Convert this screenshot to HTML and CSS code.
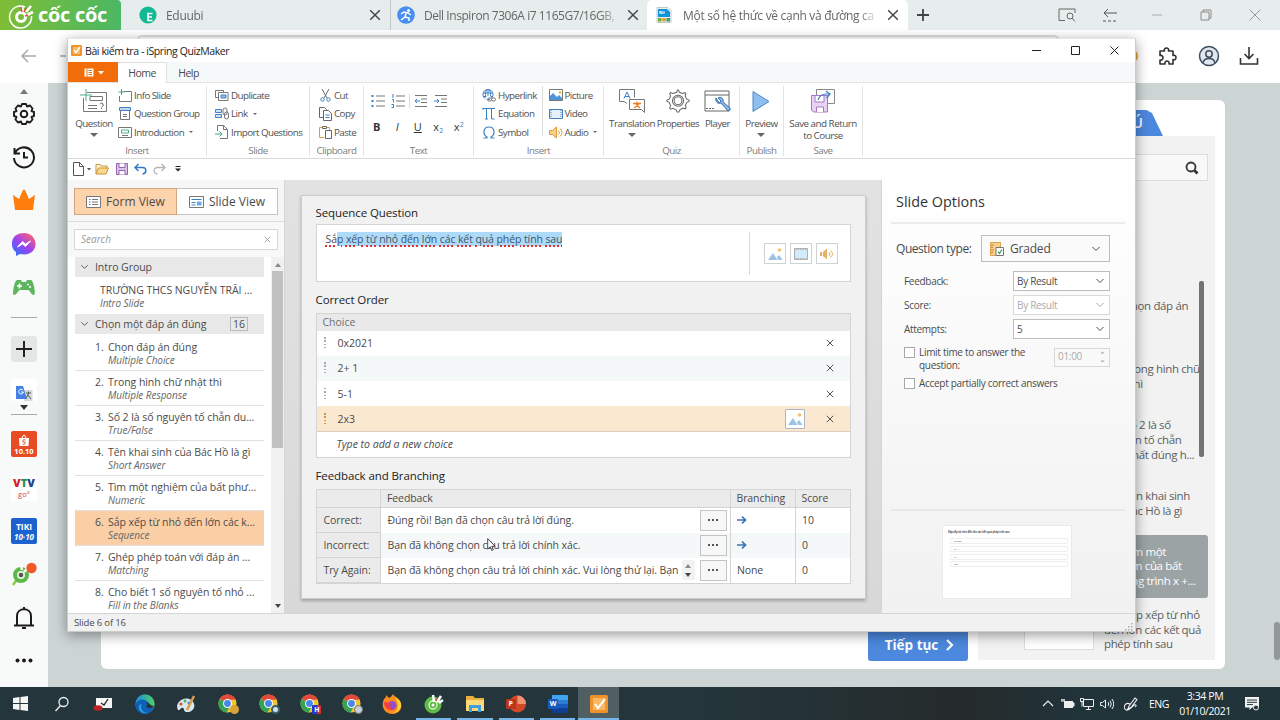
FILE: index.html
```
<!DOCTYPE html>
<html lang="vi">
<head>
  <meta charset="UTF-8" />
  <title>Bài kiểm tra - iSpring QuizMaker</title>
  <meta name="viewport" content="width=device-width, initial-scale=1" />
  <link rel="stylesheet" href="styles.css">
</head>
<body>
  <!-- shared icons -->
  <svg class="defs" width="0" height="0">
    <symbol id="chev" viewBox="0 0 10 6"><path d="M1.500 1l3.500 3.500l3.500-3.500" fill="none" stroke="currentColor" stroke-width="1"/></symbol>
    <symbol id="x" viewBox="0 0 10 10"><path d="M1 1l8 8M9 1l-8 8" fill="none" stroke="currentColor" stroke-width="1.200"/></symbol>
    <symbol id="hills" viewBox="0 0 16 14"><path d="M1 13l5-7 4.500 7zM10 11q0-3 2.500-2.500l3 4.500h-4z" fill="#9cc3e6"/><circle cx="12.500" cy="3" r="1.800" fill="#f5c069"/></symbol>
    <symbol id="chrome" viewBox="0 0 20 20">
      <circle cx="10" cy="10" r="9.500" fill="#f4c430"/>
      <path d="M10 10L1.800 5.200A9.500 9.500 0 0 1 18.700 6H10z" fill="#e2493b"/>
      <path d="M1.800 5.200A9.500 9.500 0 0 0 9 19.500L13 12z" fill="#35a355"/>
      <circle cx="10" cy="10" r="4.700" fill="#fff"/><circle cx="10" cy="10" r="3.600" fill="#4787e8"/>
    </symbol>
  </svg>

  <!-- browser -->
  <header class="tabs">
    <div class="coccoc">
      <svg width="26" height="27" viewBox="0 0 26 27" fill="none" stroke="#fff"><path d="M17 5A11 11 0 1 0 23.500 14" stroke-width="1.500"/><circle cx="13" cy="15" r="4.500" stroke-width="3"/><path d="M14 4l1 6M23 4l-5 6M25 10l-6 3" stroke-width="2.600"/><path d="M13 5l1 5M20 13l-3 1M18 6l-2 4" stroke="#e8503a" stroke-width="1.500"/></svg>
      <span>cốc cốc</span>
    </div>
    <div class="tab tab-first">
      <svg width="18" height="18" viewBox="0 0 18 18"><circle cx="9" cy="9" r="8.600" fill="#14b894"/><path d="M13.500 7.500H9v7h4.500M9 11h4" stroke="#fff" stroke-width="1.600" fill="none"/></svg>
      <span class="tab-text">Eduubi</span>
      <svg class="tab-x" width="12" height="12"><use href="#x"/></svg>
    </div>
    <div class="tab tab-second">
      <svg width="18" height="18" viewBox="0 0 18 18"><circle cx="9" cy="9" r="8.800" fill="#4a8df0"/><path d="M4 8l3-2 4 1 3 2M9 7l-1 4-4 3M8 11l4 1 0 3" stroke="#fff" stroke-width="1.500" fill="none"/><circle cx="11.500" cy="4.500" r="1.500" fill="#fff"/></svg>
      <span class="tab-text">Dell Inspiron 7306A i7 1165G7/16GB,</span>
      <svg class="tab-x" width="12" height="12"><use href="#x"/></svg>
    </div>
    <div class="tab tab-active">
      <svg width="16" height="16" viewBox="0 0 16 16"><path d="M1 .5h11l3 3V15.500H1z" fill="#e9f0f2" stroke="#bccbd0"/><path d="M2 2h9l3 3v5H2z" fill="#1292d8"/><path d="M2 11h3.500v3.500H2z" fill="#6eae38"/><path d="M6.300 11h3.500v3.500H6.300z" fill="#ee9b22"/><path d="M10.500 11H14v3.500h-3.500z" fill="#34a26b"/><path d="M4 7V4l2 3V4M8 4v3" stroke="#fff" fill="none"/></svg>
      <span class="tab-text">Một số hệ thức về cạnh và đường ca</span>
      <svg class="tab-x" width="12" height="12"><use href="#x"/></svg>
    </div>
    <svg class="tab-plus" width="14" height="14" viewBox="0 0 14 14"><path d="M7 1v12M1 7h12" stroke="#444" stroke-width="1.800"/></svg>
    <div class="browser-controls">
      <svg width="18" height="14" viewBox="0 0 18 14" fill="none" stroke="#666"><path d="M7 12.500H1V1h16v4"/><circle cx="12" cy="8" r="3"/><path d="M14 10l3 3.500"/></svg>
      <svg width="16" height="14" viewBox="0 0 16 14" fill="none" stroke="#555"><path d="M15 5H2M6 1L2 5l4 4"/><path d="M1 13h14" stroke-dasharray="3 2"/></svg>
      <svg width="12" height="12" viewBox="0 0 12 12"><path d="M1 6h10" stroke="#aaa"/></svg>
      <svg width="12" height="12" viewBox="0 0 12 12" fill="none" stroke="#888"><path d="M1 3h8v8H1zM3 3V1h8v8H9"/></svg>
      <svg width="12" height="12" viewBox="0 0 12 12"><path d="M.5.500l11 11M11.500.500l-11 11" stroke="#999"/></svg>
    </div>
  </header>

  <div class="toolbar">
    <svg width="46" height="16" viewBox="0 0 46 16" fill="none" stroke="#aaa" stroke-width="1.500"><path d="M16 8H2M8 2L2 8l6 6M40 8h6"/></svg>
    <div class="address"></div>
    <div class="toolbar-right">
      <span class="ext-dot"></span>
      <svg width="20" height="20" viewBox="0 0 20 20" fill="none" stroke="#333" stroke-width="1.600" stroke-linejoin="round"><path d="M2 5h4.500c-1.500-4 5.500-4 4 0H15v4.500c4-1.500 4 5.500 0 4V18h-4c1-4-5-4-4 0H2v-4c4 1 4-5.500 0-4.500z"/></svg>
      <svg width="22" height="22" viewBox="0 0 22 22" fill="#dfe6ee" stroke="#3e4c5e" stroke-width="1.500"><circle cx="11" cy="11" r="9.500"/><circle cx="11" cy="9" r="3.200"/><path d="M5 18c1-6 11-6 12 0" fill="none"/></svg>
      <svg width="20" height="20" viewBox="0 0 20 20" fill="none" stroke="#333" stroke-width="1.600"><path d="M10 1v11M5.500 8l4.500 4.500L14.500 8M1.500 12v6h17v-6"/></svg>
    </div>
  </div>

  <div class="browser-body">
    <nav class="side">
      <svg class="side-up" width="8" height="5" viewBox="0 0 8 5"><path d="M0 5l4-5 4 5z" fill="#777"/></svg>
      <div class="slot"><svg width="24" height="24" viewBox="0 0 24 24" fill="none" stroke="#1c1c1c" stroke-width="1.900" stroke-linejoin="round"><path d="M10 2h4l1 2.500 3-1 2.500 3-1 2.500 2.500 1v4l-2.500 1 1 2.500-2.500 3-3-1-1 2.500h-4l-1-2.500-3 1-2.500-3 1-2.500L2 14v-4l2.500-1-1-2.500 2.500-3 3 1z"/><circle cx="12" cy="12" r="3.300"/></svg></div>
      <div class="slot"><svg width="24" height="24" viewBox="0 0 24 24" fill="none" stroke="#1c1c1c" stroke-width="2"><path d="M2.500 3v5.500H8M3 8a10 10 0 1 1-1 5" /><path d="M12 7v5.500h4" /></svg></div>
      <div class="slot"><svg width="24" height="24" viewBox="0 0 24 24"><path d="M1 7l6 4 4-9q1-1 2 0l4 9 6-4-2 15H3z" fill="#ff7f0e"/></svg></div>
      <div class="slot"><svg width="24" height="24" viewBox="0 0 24 24"><defs><linearGradient id="msg" x1="0" y1="1" x2=".8" y2="0"><stop offset="0" stop-color="#1b78ff"/><stop offset=".55" stop-color="#a142f0"/><stop offset="1" stop-color="#ff6470"/></linearGradient></defs><path d="M12 1C-3 1-2 17 4 20v4l4-2c20 4 20-21 4-21z" fill="url(#msg)"/><path d="M5.500 15l5-5.500 3 2.500 5-3-5 5.500-3-2.500z" fill="#fff" stroke="#fff"/></svg></div>
      <div class="slot"><svg width="24" height="20" viewBox="0 0 24 20"><path d="M5 3h4l1 2h4l1-2h4c3 1 5 15 3 15-3 0-4-5-6-5H8c-2 0-3 5-6 5C0 18 2 4 5 3z" fill="#5cb660"/><path d="M5 9h5M7.500 6.500v5M15 7.500h2M17 10h2" stroke="#fff" stroke-width="1.700"/></svg></div>
      <hr>
      <div class="slot"><div class="plus-box"><svg width="18" height="18" viewBox="0 0 18 18"><path d="M9 1v16M1 9h16" stroke="#222" stroke-width="2"/></svg></div></div>
      <div class="translate"><svg width="17" height="15" viewBox="0 0 17 15"><path d="M7 4h9.500v11H8z" fill="#d5dadc"/><path d="M0 0h7l4 13H0z" fill="#4480e6"/><path d="M7 4.200A2.400 2.400 0 1 0 7.500 6H5" stroke="#fff" fill="none"/><path d="M10 7h5M12.500 5.500V7l-2 5M12 9l3 4" stroke="#555" fill="none"/></svg></div>
      <svg class="side-down" width="8" height="5" viewBox="0 0 8 5"><path d="M0 0l4 5 4-5z" fill="#333"/></svg>
      <hr>
      <div class="slot"><div class="app app-shopee"><svg width="12" height="12" viewBox="0 0 12 12"><path d="M1 4h10l-.5 8h-9z" fill="#fff"/><path d="M4 4q2-6 4 0" stroke="#fff" fill="none"/><path d="M7.500 6C4 5 4 8 6 8s2 3-1.500 2" stroke="#e84c24" fill="none"/></svg><b>10.10</b></div></div>
      <div class="slot"><div class="app app-vtv"><b><i>V</i><i>T</i><i>V</i></b><span>go°</span></div></div>
      <div class="slot"><div class="app app-tiki"><b>TIKI</b><b class="it">10·10</b></div></div>
      <div class="slot"><svg width="26" height="26" viewBox="0 0 26 26"><path d="M2 24l5-7" stroke="#8bcd3c" stroke-width="2.500"/><circle cx="10" cy="14" r="6" fill="#e9f4e2" stroke="#5cb947" stroke-width="4"/><path d="M10 4l1 5M16 8l-3 3" stroke="#fff" stroke-width="2.500"/><circle cx="10" cy="14" r="2.300" fill="#555"/><circle cx="20.500" cy="7" r="5.200" fill="#f1592a"/></svg></div>
      <div class="slot"><svg width="22" height="24" viewBox="0 0 22 24" fill="none" stroke="#1c1c1c" stroke-width="2"><path d="M1 19.500h20M4 19V10c0-9 14-9 14 0v9M11 1v3M9 22h4"/></svg></div>
      <div class="slot"><svg width="18" height="5" viewBox="0 0 18 5" fill="#1c1c1c"><circle cx="2.500" cy="2.500" r="2"/><circle cx="9" cy="2.500" r="2"/><circle cx="15.500" cy="2.500" r="2"/></svg></div>
    </nav>

    <main class="page">
      <div class="lesson">
        <div class="lesson-main">
          <button class="next">Tiếp tục <svg width="9" height="14" viewBox="0 0 9 14"><path d="M2 2l5 5-5 5" fill="none" stroke="#fff" stroke-width="2.200"/></svg></button>
        </div>
        <aside class="outline">
          <div class="outline-tab">GHI CHÚ</div>
          <div class="outline-panel">
            <div class="outline-search"><svg width="14" height="14" viewBox="0 0 14 14" fill="none" stroke="#333" stroke-width="1.800"><circle cx="6" cy="6" r="4.500"/><path d="M9.500 9.500l3 3" stroke-width="2.800"/></svg></div>
            <div class="outline-item">Chọn đáp án<br>đúng</div>
            <div class="outline-item">Trong hình chữ<br>nhật thì</div>
            <div class="outline-item">Số 2 là số<br>nguyên tố chẵn<br>duy nhất đúng h...</div>
            <div class="outline-item">Tên khai sinh<br>của Bác Hồ là gì</div>
            <div class="outline-item current">Tìm một<br>nghiệm của bất<br>phương trình x +...</div>
            <div class="outline-item">Sắp xếp từ nhỏ<br>đến lớn các kết quả<br>phép tính sau</div>
            <div class="outline-thumb"></div>
            <div class="outline-scroll"></div>
          </div>
        </aside>
      </div>
      <div class="page-scroll"></div>
    </main>
  </div>

  <!-- quiz maker window -->
  <section class="window">
    <div class="titlebar">
      <svg width="11" height="11" viewBox="0 0 11 11"><rect width="11" height="11" rx="1" fill="#f0932b"/><rect x="2" y="2" width="7" height="7" fill="#f8b965"/><path d="M3 5l2 2.500L9 2" stroke="#fff" stroke-width="1.400" fill="none"/></svg>
      <span>Bài kiểm tra - iSpring QuizMaker</span>
      <div class="win-controls">
        <svg width="9" height="9" viewBox="0 0 9 9"><path d="M0 4.500h9" stroke="#222"/></svg>
        <svg width="9" height="9" viewBox="0 0 9 9"><path d="M.5.500h8v8h-8z" stroke="#222" fill="none"/></svg>
        <svg width="9" height="9" viewBox="0 0 9 9"><path d="M.5.500l8 8M8.500.500l-8 8" stroke="#222"/></svg>
      </div>
    </div>

    <div class="menu">
      <div class="menu-file"><svg width="22" height="9" viewBox="0 0 22 9"><path d="M.5.500h9v8h-9z" fill="#fff"/><path d="M3 .5v8M4.500 2.500H8M4.500 4.500H8M4.500 6.500H8" stroke="#f36c0a"/><path d="M14 3h6l-3 3.500z" fill="#fff"/></svg></div>
      <div class="menu-tab active">Home</div>
      <div class="menu-tab">Help</div>
    </div>

    <div class="ribbon">
      <div class="group">
        <div class="group-body">
          <div class="big w-question">
            <svg width="28" height="24" viewBox="0 0 28 24" fill="none" stroke="#777"><path d="M7 3.500h19.500v19h-23V9"/><path d="M10 7.500h12.500v4H10zM8 16.500h9M8 19.500h9"/><path d="M20 15q2-2 3 0t-1.500 3M21.500 19v1" stroke="#666"/><path d="M6 0v12M0 6h12" stroke="#4cae85"/></svg>
            <span>Question</span><i class="arrow"></i>
          </div>
          <div class="col">
            <div class="cmd"><svg width="14" height="13" viewBox="0 0 14 13" fill="none" stroke="#777"><path d="M6 2.500h7.500v10h-12V7"/><path d="M3.500 0v6M.5 3h6" stroke="#3ea77b"/></svg>Info Slide</div>
            <div class="cmd"><svg width="14" height="13" viewBox="0 0 14 13" fill="none" stroke="#777"><path d="M2.500 4v8.500h9V4M5 7.500h4M5 9.500h4"/><path d="M1.500.500h11v3h-11z" stroke="#4580c4" fill="#bcd6f0"/></svg>Question Group</div>
            <div class="cmd"><svg width="14" height="13" viewBox="0 0 14 13" fill="none" stroke="#777"><path d="M.5 1.500h13v10H.5z"/><path d="M3.500 4h7v3h-7z" stroke="#4cae85"/><path d="M4 9.500h6"/></svg>Introduction <i class="arrow sm"></i></div>
          </div>
        </div>
        <div class="group-name">Insert</div>
      </div>
      <div class="group">
        <div class="group-body pad-slide">
          <div class="col">
            <div class="cmd"><svg width="14" height="13" viewBox="0 0 14 13" fill="#fff" stroke="#777"><path d="M.5 1.500h8v7h-8z"/><path d="M3.500 3.500h9.500v8H3.500z"/><path d="M6 6h5v3H6z" fill="#8fbbe8" stroke="#4580c4"/></svg>Duplicate</div>
            <div class="cmd"><svg width="14" height="13" viewBox="0 0 14 13" fill="none"><path d="M.5 2.500h6v3h-6zM.5 7.500h6v3h-6z" fill="#cfe3f6" stroke="#4580c4"/><rect x="8" y="1" width="4" height="7" rx="2" stroke="#777"/><rect x="9.500" y="5" width="4" height="7" rx="2" stroke="#777"/></svg>Link <i class="arrow sm"></i></div>
            <div class="cmd"><svg width="14" height="14" viewBox="0 0 14 14" fill="none" stroke="#777"><path d="M2.500 6V.500h6l4 4v9H5M8.500.500v4h4"/><path d="M0 9h7M4.500 6.500L7 9l-2.500 2.500" stroke="#3ea77b"/></svg>Import Questions</div>
          </div>
        </div>
        <div class="group-name">Slide</div>
      </div>
      <div class="group">
        <div class="group-body pad-clip">
          <div class="col">
            <div class="cmd"><svg width="13" height="13" viewBox="0 0 13 13" fill="none"><path d="M3 0l5 9M10 0L5 9" stroke="#666"/><circle cx="3.500" cy="10.500" r="1.700" stroke="#3b7fc4"/><circle cx="9.500" cy="10.500" r="1.700" stroke="#3b7fc4"/></svg>Cut</div>
            <div class="cmd"><svg width="13" height="14" viewBox="0 0 13 14" fill="#fff" stroke="#666"><path d="M.5.500h5l2 2v8h-7z"/><path d="M4.500 3.500h5l3 3v7h-8z"/><path d="M6.500 8h4M6.500 10.500h4" stroke="#3b7fc4"/></svg>Copy</div>
            <div class="cmd"><svg width="13" height="14" viewBox="0 0 13 14" fill="none"><path d="M4 2.500H.5v10H5M8 2.500h2.500V5" stroke="#e29a35"/><path d="M3.500 1.500h4v2h-4z" stroke="#666"/><path d="M6.500 5.500h6v8h-6z" stroke="#666" fill="#fff"/></svg>Paste</div>
          </div>
        </div>
        <div class="group-name">Clipboard</div>
      </div>
      <div class="group">
        <div class="group-body text-tools">
          <div class="tool-row">
            <svg width="14" height="14" viewBox="0 0 14 14"><path d="M5 2h9M5 7h9M5 12h9" stroke="#777"/><path d="M.5 1h2v2h-2zM.5 6h2v2h-2zM.5 11h2v2h-2z" fill="#3b7fc4"/></svg>
            <svg width="14" height="14" viewBox="0 0 14 14"><path d="M5 2h9M5 7h9M5 12h9" stroke="#777"/><path d="M2 0v4M1 5.500h1.500v3M.5 10.500h2v3h-2" stroke="#3b7fc4" fill="none"/></svg>
            <i class="bar"></i>
            <svg width="14" height="12" viewBox="0 0 14 12" fill="none"><path d="M1 .5h12M7 4h6M7 7.500h6M1 11.500h12" stroke="#777"/><path d="M6 6H1M3 4L1 6l2 2" stroke="#3b7fc4"/></svg>
            <svg width="14" height="12" viewBox="0 0 14 12" fill="none"><path d="M1 .5h12M7 4h6M7 7.500h6M1 11.500h12" stroke="#777"/><path d="M0 6h5M3 4l2 2-2 2" stroke="#3b7fc4"/></svg>
          </div>
          <div class="tool-row letters"><b>B</b><em>I</em><u>U</u><span>x<small class="sub">2</small></span><span>x<small class="sup">2</small></span></div>
        </div>
        <div class="group-name">Text</div>
      </div>
      <div class="group">
        <div class="group-body pad-ins">
          <div class="col col-left">
            <div class="cmd"><svg width="14" height="13" viewBox="0 0 14 13" fill="none" stroke="#3b7fc4"><circle cx="6" cy="5.500" r="5"/><path d="M1 4h10M1 7.500h10M6 .5v10"/><ellipse cx="6" cy="5.500" rx="2.500" ry="5"/><path d="M5 10.500a1.500 1.500 0 0 1 3-1M8 10.500h3" stroke="#fff" stroke-width="3"/><rect x="5.500" y="9" width="4" height="3" rx="1.500" stroke="#777"/><rect x="9.500" y="9" width="4" height="3" rx="1.500" stroke="#777"/></svg>Hyperlink</div>
            <div class="cmd"><svg width="14" height="13" viewBox="0 0 14 13" fill="none" stroke="#3b7fc4"><path d="M1 1.500h12M1 1v2M4.500 1.500V12M3 12h3M9.500 1.500V12h3"/></svg>Equation</div>
            <div class="cmd"><svg width="14" height="13" viewBox="0 0 14 13" fill="none" stroke="#3b7fc4" stroke-width="1.200"><path d="M1.500 12H5v-1C0 8 1.500 1 7 1s7 7 2 10v1h3.500"/></svg>Symbol</div>
          </div>
          <div class="col col-right">
            <div class="cmd"><svg width="14" height="12" viewBox="0 0 14 12"><path d="M.5.500h13v11H.5z" fill="#fff" stroke="#777"/><path d="M1 11V7l3-3 4 4 2-2 3 3v2z" fill="#4f94d6"/><circle cx="11" cy="3.500" r="1.300" fill="#f0b64c"/></svg>Picture</div>
            <div class="cmd"><svg width="14" height="12" viewBox="0 0 14 12"><path d="M.5 1.500h13v9H.5z" fill="#e6f2fb" stroke="#4580c4"/><path d="M2 2v8M12 2v8" stroke="#4580c4" stroke-dasharray="1 1"/></svg>Video</div>
            <div class="cmd"><svg width="14" height="13" viewBox="0 0 14 13" fill="none" stroke="#e09a32"><path d="M.5 4.500h3l4-3.500v11l-4-3.500h-3z" fill="#f8cf8d"/><path d="M9.500 4.500q2 2 0 4M11 2.500q4 4 0 8"/></svg>Audio <i class="arrow sm"></i></div>
          </div>
        </div>
        <div class="group-name">Insert</div>
      </div>
      <div class="group">
        <div class="group-body quiz">
          <div class="big"><svg width="26" height="24" viewBox="0 0 26 24" fill="none" stroke="#777"><path d="M8 14.500l-3-2v0H.5V.500h15v8"/><path d="M10.500 10.500h15v13l-3-3h-12z" fill="#fff"/><path d="M5 9.500l3-6.500 3 6.500M6 7.500h4" stroke="#3b7fc4"/><path d="M14 14.500h8M18 12.500v2M15 19l5-4M21 19l-4-4" stroke="#ee7e22" stroke-width="1.300"/></svg><span>Translation</span><i class="arrow"></i></div>
          <div class="big"><svg width="26" height="26" viewBox="0 0 26 26" fill="none" stroke="#666" stroke-width="1.100"><path d="M11.500 3.500L12.500 1h1l1 2.500 3.500 1.300L20.500 4l1 1-.8 2.500L22.500 11l2.500 1v1.500l-2.500 1-1.500 3.500.8 2.500-1 1-2.500-.8L15 22.500 14 25h-2l-1-2.500-3.500-1.500-2.500.8-1-1L5 18l-1.500-3.500L1 13.500V12l2.500-1L5 7.500 4 5l1-1 2.500.8z"/><circle cx="13" cy="12.700" r="6"/><circle cx="13" cy="12.700" r="4.200"/></svg><span>Properties</span></div>
          <div class="big"><svg width="28" height="24" viewBox="0 0 28 24" fill="none" stroke="#666"><path d="M1 2h24v20H1zM1 6h24"/><path d="M2 19.500h9" stroke-dasharray="2 1"/><path d="M12 9c-1 5 3 6 5 5l7 8q3 0 2-3l-7-6c1-3-2-6-5-4l3 3-2 2z" fill="#8ab9ea" stroke="#3b6fae"/></svg><span>Player</span></div>
        </div>
        <div class="group-name">Quiz</div>
      </div>
      <div class="group">
        <div class="group-body center">
          <div class="big"><svg width="18" height="24" viewBox="0 0 18 24"><path d="M1 2.500l16 10-16 10z" fill="#8fbfee" stroke="#4a88cc"/></svg><span>Preview</span><i class="arrow"></i></div>
        </div>
        <div class="group-name">Publish</div>
      </div>
      <div class="group">
        <div class="group-body center">
          <div class="big"><svg width="24" height="24" viewBox="0 0 24 24" fill="#fff" stroke="#888"><path d="M5.500.500h18v14h-18z"/><path d="M.5 6.500h16v16.500h-14l-2-2z" fill="#e7d3f2" stroke="#a876c4"/><path d="M4 7v6h9V7M5.500 23v-5h7v5" stroke="#a876c4"/><path d="M7 11q2-6 8-6h3M15 2l4 3-3.500 4" fill="none" stroke="#3b7fc4" stroke-width="1.200"/></svg><span>Save and Return<br>to Course</span></div>
        </div>
        <div class="group-name">Save</div>
      </div>
    </div>

    <div class="quick">
      <svg width="18" height="14" viewBox="0 0 18 14" fill="none" stroke="#555"><path d="M.5.500h6l4 4v9H.500zM6.500.500v4h4"/><path d="M14 6h4l-2 2.500z" fill="#555" stroke="none"/></svg>
      <svg width="14" height="12" viewBox="0 0 14 12"><path d="M1 11V1.500h4l1 1.500h6v3" fill="#fff3d4" stroke="#c8953a"/><path d="M1 11l2.500-6h10L11 11z" fill="#fbd88f" stroke="#c8953a"/></svg>
      <svg width="12" height="12" viewBox="0 0 12 12"><path d="M.5.500h11v11H.5z" fill="#dcc3ec" stroke="#9463b4"/><path d="M3 .5v4h6v-4M3 11.500v-4h6v4" fill="#fff" stroke="#9463b4"/></svg>
      <svg width="13" height="12" viewBox="0 0 13 12" fill="none" stroke="#2f7cc4" stroke-width="1.500"><path d="M4.500 1L1 4.500 4.500 8M1.500 4.500h7c4.500 0 4.500 6 0 6.500"/></svg>
      <svg width="13" height="12" viewBox="0 0 13 12" fill="none" stroke="#b5b5b5" stroke-width="1.300"><path d="M8.500 1L12 4.500 8.500 8M11.500 4.500h-7c-4.500 0-4.500 6 0 6.500"/></svg>
      <svg width="6" height="6" viewBox="0 0 6 6"><path d="M.5.500h5" stroke="#222"/><path d="M0 2.500h6l-3 3z" fill="#222"/></svg>
    </div>

    <div class="work">
      <div class="slides">
        <div class="views">
          <div class="view active"><svg width="15" height="12" viewBox="0 0 15 12"><path d="M.5.500h14v11H.5z" fill="#fff" stroke="#777"/><path d="M6 3.500h6M6 6h6M6 8.500h6" stroke="#777"/><path d="M3 3.500h1.500M3 6h1.500M3 8.500h1.500" stroke="#3b7fc4"/></svg>Form View</div>
          <div class="view"><svg width="15" height="12" viewBox="0 0 15 12"><path d="M.5.500h14v11H.5z" fill="#fff" stroke="#777"/><path d="M2.500 3.500h10M2.500 6.500h4M2.500 9h4" stroke="#3b7fc4"/><path d="M8 5.500h4.500v4H8z" fill="#6da8e2"/></svg>Slide View</div>
        </div>
        <div class="search"><span>Search</span><svg width="7" height="7"><use href="#x"/></svg></div>
        <div class="list-wrap">
          <div class="list">
            <div class="list-group"><svg width="9" height="6"><use href="#chev"/></svg>Intro Group</div>
            <div class="slide intro"><div>TRƯỜNG THCS NGUYỄN TRÃI ...<em>Intro Slide</em></div></div>
            <div class="list-group"><svg width="9" height="6"><use href="#chev"/></svg>Chọn một đáp án đúng <span class="count">16</span></div>
            <div class="slide first"><b>1.</b><div>Chọn đáp án đúng<em>Multiple Choice</em></div></div>
            <div class="slide"><b>2.</b><div>Trong hình chữ nhật thì<em>Multiple Response</em></div></div>
            <div class="slide"><b>3.</b><div>Số 2 là số nguyên tố chẵn du...<em>True/False</em></div></div>
            <div class="slide"><b>4.</b><div>Tên khai sinh của Bác Hồ là gì<em>Short Answer</em></div></div>
            <div class="slide"><b>5.</b><div>Tìm một nghiệm của bất phư...<em>Numeric</em></div></div>
            <div class="slide selected"><b>6.</b><div>Sắp xếp từ nhỏ đến lớn các k...<em>Sequence</em></div></div>
            <div class="slide"><b>7.</b><div>Ghép phép toán với đáp án ...<em>Matching</em></div></div>
            <div class="slide"><b>8.</b><div>Cho biết 1 số nguyên tố nhỏ ...<em>Fill in the Blanks</em></div></div>
          </div>
          <div class="scroll"><i class="tri up"></i><div class="scroll-thumb"></div><i class="tri"></i></div>
        </div>
      </div>

      <div class="canvas">
        <div class="card">
          <h3>Sequence Question</h3>
          <div class="question">
            <p><span class="misspelt">Sắ<mark>p</mark></span><mark> <span class="misspelt">xếp</span> <span class="misspelt">từ</span> <span class="misspelt">nhỏ</span> <span class="misspelt">đến</span> <span class="misspelt">lớn</span> <span class="misspelt">các</span> <span class="misspelt">kết</span> <span class="misspelt">quả</span> <span class="misspelt">phép</span> <span class="misspelt">tính</span> <span class="misspelt">sau</span></mark></p>
            <div class="media">
              <span class="media-btn"><svg width="16" height="14"><use href="#hills"/></svg></span>
              <span class="media-btn"><svg width="14" height="12" viewBox="0 0 14 12"><path d="M.5.500h13v11H.5z" fill="#d3eafa" stroke="#b0b0b0"/><path d="M1 1.500h12M1 10.500h12" stroke="#b0b0b0" stroke-dasharray="1.500 1"/></svg></span>
              <span class="media-btn"><svg width="14" height="12" viewBox="0 0 14 12"><path d="M0 4h2v4H0zM3 4l4-3.500v11L3 8z" fill="#e4b265"/><path d="M9 4q2 2 0 4M10.500 2.500q4 3.500 0 7" fill="none" stroke="#e4b265"/></svg></span>
            </div>
          </div>

          <h3 class="h-order">Correct Order</h3>
          <div class="choices">
            <div class="choice-head">Choice</div>
            <div class="choice"><i class="grip"></i><span>0x2021</span><svg width="8" height="8"><use href="#x"/></svg></div>
            <div class="choice alt"><i class="grip"></i><span>2+ 1</span><svg width="8" height="8"><use href="#x"/></svg></div>
            <div class="choice"><i class="grip"></i><span>5-1</span><svg width="8" height="8"><use href="#x"/></svg></div>
            <div class="choice picked"><i class="grip"></i><span>2x3</span><b class="choice-pic"><svg width="16" height="14"><use href="#hills"/></svg></b><svg width="8" height="8"><use href="#x"/></svg></div>
            <div class="choice new">Type to add a new choice</div>
          </div>

          <h3 class="h-feedback">Feedback and Branching</h3>
          <div class="feedback">
            <div class="th"></div><div class="th">Feedback</div><div class="th">Branching</div><div class="th">Score</div>
            <div class="th row-h">Correct:</div><div class="td msg">Đúng rồi! Bạn đã chọn câu trả lời đúng.<i class="more"></i></div><div class="td"><svg width="10" height="8" viewBox="0 0 10 8"><path d="M0 4h8M5 .7L8.500 4 5 7.300" fill="none" stroke="#3d76b5" stroke-width="1.700"/></svg></div><div class="td">10</div>
            <div class="th row-h">Incorrect:</div><div class="td msg alt">Bạn đã không chọn câu trả lời chính xác.<i class="more"></i></div><div class="td alt"><svg width="10" height="8" viewBox="0 0 10 8"><path d="M0 4h8M5 .7L8.500 4 5 7.300" fill="none" stroke="#3d76b5" stroke-width="1.700"/></svg></div><div class="td alt">0</div>
            <div class="th row-h">Try Again:</div><div class="td msg">Bạn đã không chọn câu trả lời chính xác. Vui lòng thử lại. Bạn<span class="updown"><i class="tri up"></i><i class="tri"></i></span><i class="more"></i></div><div class="td">None</div><div class="td">0</div>
          </div>
        </div>
      </div>

      <div class="options">
        <h2>Slide Options</h2>
        <div class="opt opt-type"><span>Question type:</span>
          <div class="select big-select"><svg width="14" height="14" viewBox="0 0 14 14"><path d="M.5.500h10v13H.5z" fill="#f8cf8d" stroke="#d9a44c"/><path d="M1 3h3M1 5.500h2M1 8h3M1 10.500h2" stroke="#c48b34"/><path d="M6 5.500h7.500v8H6z" fill="#fff" stroke="#777"/><path d="M8 9.500l1.500 2L12 7.500" stroke="#2fa04c" stroke-width="1.200" fill="none"/></svg>Graded<svg class="chev" width="10" height="6"><use href="#chev"/></svg></div>
        </div>
        <div class="opt"><span>Feedback:</span><div class="select">By Result<svg class="chev" width="10" height="6"><use href="#chev"/></svg></div></div>
        <div class="opt"><span>Score:</span><div class="select disabled">By Result<svg class="chev" width="10" height="6"><use href="#chev"/></svg></div></div>
        <div class="opt"><span>Attempts:</span><div class="select">5<svg class="chev" width="10" height="6"><use href="#chev"/></svg></div></div>
        <div class="check"><i></i><span>Limit time to answer the<br>question:</span><div class="time">01:00<svg width="5" height="12" viewBox="0 0 5 12"><path d="M.5 2.500l2-2 2 2zM.5 9.500l2 2 2-2z" fill="#aaa"/></svg></div></div>
        <div class="check partial"><i></i><span>Accept partially correct answers</span></div>
        <div class="preview">
          <div class="preview-slide">
            <strong>Sắp xếp từ nhỏ đến lớn các kết quả phép tính sau</strong>
            <p>0x2021</p><p>2+ 1</p><p>5-1</p><p>2x3</p>
          </div>
        </div>
      </div>
    </div>

    <div class="status">Slide 6 of 16<svg width="8" height="8" viewBox="0 0 8 8" fill="#aaa"><path d="M6 0h1.500v1.500H6zM3 3h1.500v1.500H3zM6 3h1.500v1.500H6zM0 6h1.500v1.500H0zM3 6h1.500v1.500H3zM6 6h1.500v1.500H6z"/></svg></div>

    <svg class="cursor" width="9" height="13" viewBox="0 0 9 13"><path d="M.7.700v10.500l2.500-2.300 1.600 3.500 1.500-.7-1.600-3.400h3.500z" fill="#fff" stroke="#333" stroke-width=".9"/></svg>
  </section>

  <footer class="taskbar">
    <div class="apps">
      <div><svg width="15" height="15" viewBox="0 0 15 15"><path d="M0 2l6.500-1v6H0zM7.500.900L15 0v7H7.500zM0 8h6.500v6L0 13zM7.500 8H15v7l-7.500-1z" fill="#f4f6f6"/></svg></div>
      <div><svg width="16" height="16" viewBox="0 0 16 16" fill="none" stroke="#eee" stroke-width="1.300"><circle cx="9.500" cy="6" r="4.500"/><path d="M6.500 9.500L1.500 15"/></svg></div>
      <div><svg width="20" height="16" viewBox="0 0 20 16"><path d="M3 2h16v10H3z" fill="#f5f5f5"/><path d="M8 7l3 2 4-6" stroke="#222" stroke-width="1.300" fill="none"/><ellipse cx="5" cy="12" rx="4.500" ry="2.800" fill="#c32222"/></svg></div>
      <div><svg width="20" height="20" viewBox="0 0 20 20"><defs><linearGradient id="edge"><stop offset="0" stop-color="#1a8fe0"/><stop offset="1" stop-color="#50d06a"/></linearGradient></defs><circle cx="10" cy="10" r="9.700" fill="url(#edge)"/><path d="M.5 11C2 5 10 4 12 8c1 2-1 3-1 4 2 3 6 1 8 1-2 5-6 7-9 7S0 17 .5 11z" fill="#0f5fb8"/><path d="M7 10c-3 4 1 9 6 9-9 2-12-8-6-9z" fill="#2ba4e6"/><path d="M11 12c1-1 2-3 0-5 3 1 4 5 8 5-2 3-7 3-8 0z" fill="#25343a"/></svg></div>
      <div><svg width="20" height="20" viewBox="0 0 20 20"><path d="M2 16C-2 9 8 1 15 6s2 13-5 12c-3-1-1-3-3-4s-3 3-5 2z" fill="#d9e8ee"/><circle cx="5" cy="10" r="1.500" fill="#d74f3c"/><circle cx="9" cy="7" r="1.500" fill="#4fae52"/><circle cx="13" cy="9" r="1.500" fill="#3b85cf"/><path d="M11 16l7-14" stroke="#d99c50" stroke-width="2.500"/></svg></div>
      <div><svg width="19" height="19"><use href="#chrome"/></svg><i class="badge b-gold"></i></div>
      <div><svg width="19" height="19"><use href="#chrome"/></svg><i class="badge b-photo"></i></div>
      <div><svg width="19" height="19"><use href="#chrome"/></svg><i class="badge b-flag">H</i></div>
      <div><svg width="19" height="19"><use href="#chrome"/></svg><i class="badge b-gray"></i></div>
      <div><svg width="20" height="20" viewBox="0 0 20 20"><path d="M2 5c2-1 2-3 2-4l3 3c3-1 3-3 4-4 1 3 6 4 7 7 4 8-2 13-8 13S-2 14 2 5z" fill="#ff8a1f"/><path d="M12 1c2 4 6 4 7 9 1 5-4 9-8 9 8-4 5-10 1-18z" fill="#ffd43b"/><circle cx="10" cy="11.500" r="4.500" fill="#8a4fd8"/><path d="M2 8c3 0 5 1 8 1-3 2-2 5 2 6-6 3-10-2-10-7z" fill="#f23c4a"/></svg></div>
      <div class="open"><svg width="20" height="20" viewBox="0 0 20 20"><circle cx="9" cy="11" r="6.500" fill="#fff" stroke="#5fbb46" stroke-width="4"/><circle cx="9" cy="11" r="2.500" stroke="#5fbb46" stroke-width="2" fill="#fff"/><path d="M9 1l1 7M17 2l-4 6M19 6l-4 3" stroke="#fff" stroke-width="2.500"/><path d="M14 3l-2 4" stroke="#e33" /></svg></div>
      <div class="open"><svg width="20" height="18" viewBox="0 0 20 18"><path d="M1 1h7l2 2h9v13H1z" fill="#e9ae3b"/><path d="M1 5h18v11H1z" fill="#fcd978"/><path d="M4 17v-7h12v7h-3v-4H7v4z" fill="#3d9fe0"/></svg></div>
      <div class="open"><svg width="20" height="18" viewBox="0 0 20 18"><circle cx="11.500" cy="9" r="8.500" fill="#d2492a"/><path d="M11.500.500A8.500 8.500 0 0 1 20 9h-8.500z" fill="#f0936f"/><rect y="4" width="10" height="10" rx="1" fill="#b9361c"/></svg><b class="office">P</b></div>
      <div class="open"><svg width="20" height="18" viewBox="0 0 20 18"><path d="M4 0h15q1 0 1 1v4H4z" fill="#41a5ee"/><path d="M4 5h16v4H4z" fill="#2b7cd3"/><path d="M4 9h16v4H4z" fill="#185abd"/><path d="M4 13h16v5H4z" fill="#103f91"/><rect y="4" width="10" height="10" rx="1" fill="#185abd"/></svg><b class="office">W</b></div>
      <div class="open focus"><svg width="18" height="18" viewBox="0 0 18 18"><rect width="18" height="18" rx="1.500" fill="#f0922c"/><rect x="3" y="3" width="12" height="12" fill="#f8b765"/><path d="M5 9l3 4 7-9" stroke="#fff" stroke-width="2" fill="none"/></svg></div>
    </div>
    <div class="tray">
      <svg width="12" height="7" viewBox="0 0 12 7"><path d="M1 6l5-5 5 5" fill="none" stroke="#eee" stroke-width="1.200"/></svg>
      <svg width="14" height="10" viewBox="0 0 14 10"><path d="M3 2h9v1.500h1.500v4H12V9H3z" fill="#eee"/><path d="M0 1h4M1 0v3M3 0v3" stroke="#eee"/></svg>
      <svg width="14" height="12" viewBox="0 0 14 12" fill="none" stroke="#eee"><path d="M3.500 1.500h10v7h-10zM6 11.500h5M8.500 8.500v3M.5.500h3v3h-3zM2 3.500v5"/></svg>
      <svg width="14" height="12" viewBox="0 0 14 12" fill="none" stroke="#eee"><path d="M.5 4.500h2L5.500 2v8L2.500 7.500h-2zM8 4q1.500 2 0 4M10 2.500q2.500 3.500 0 7M12 1q3.500 5 0 10"/></svg>
      <svg width="14" height="14" viewBox="0 0 14 14" fill="none" stroke="#eee" stroke-width="1.100"><path d="M5 9l6-8 2 1.500-6 8-3 1zM6 7c-4-2-7 2-5 5s6-1 9-4c2-1 3 1 1 2"/></svg>
      <span>ENG</span>
      <span class="clock">3:34 PM<br>01/10/2021</span>
      <svg width="14" height="14" viewBox="0 0 14 14"><path d="M0 0h14v10.500H7L4.500 13v-2.500H0z" fill="#f2f2f2"/><path d="M2 3h10M2 5.300h10M2 7.600h6" stroke="#25363c"/><circle cx="11" cy="10.500" r="2.500" fill="#25363c" stroke="#eee"/></svg>
    </div>
  </footer>
</body>
</html>
```
FILE: styles.css
```
:root {
  --text: #4b4b4b;
  --muted: #7d7d7d;
  --line: #d4d4d4;
  --orange: #fbcfa6;
  --blue: #4c88dd;
}

* {
  box-sizing: border-box;
}

body {
  margin: 0;
  width: 1280px;
  height: 720px;
  overflow: hidden;
  position: relative;
  display: flex;
  flex-direction: column;
  font-family: "Open Sans", "Noto Sans", sans-serif;
  font-size: 10.5px;
  color: var(--text);
}

svg {
  display: block;
  flex: none;
}

.defs {
  position: absolute;
}

h2, h3, p {
  margin: 0;
  font-weight: normal;
}

/* browser tabs */
.tabs {
  height: 30px;
  display: flex;
  align-items: center;
  background: #e7edec;
}

.coccoc {
  width: 121px;
  height: 30px;
  padding-left: 8px;
  display: flex;
  align-items: center;
  gap: 4px;
  background: linear-gradient(90deg, #7fbd35, #4bb865);
  border-radius: 0 4px 0 0;
  color: #fff;
  font: bold 20px/30px "Open Sans", sans-serif;
  letter-spacing: -0.3px;
}

.tab {
  height: 30px;
  display: flex;
  align-items: center;
  font-size: 12px;
  letter-spacing: -0.45px;
  color: #666;
}

.tab-first {
  width: 269px;
  padding: 0 9px 0 18px;
  gap: 9px;
  letter-spacing: -0.3px;
}

.tab-second {
  width: 257px;
  padding: 0 8px 0 7px;
  gap: 9px;
  box-shadow: inset 1px 0 #c2c8c8;
}

.tab-active {
  width: 261px;
  padding: 0 9px 0 9px;
  gap: 11px;
  background: #fff;
  border-radius: 5px 5px 0 0;
  letter-spacing: -0.3px;
}

.tab-text {
  flex: 1;
  white-space: nowrap;
  -webkit-mask-image: linear-gradient(90deg, #000 176px, transparent 196px);
}

.tab-x {
  color: #444;
}

.tab-plus {
  margin-left: 8px;
}

.browser-controls {
  margin-left: auto;
  width: 234px;
  display: grid;
  grid-template-columns: 42px 44px 50px 47px 51px;
  justify-items: center;
  align-items: center;
}

.toolbar {
  height: 53px;
  display: flex;
  align-items: center;
  padding: 0 0 1px 20px;
  background: #fff;
}

.address {
  flex: 1;
  height: 42px;
  margin-left: 70px;
  border: 2px solid #ddd;
  border-radius: 6px;
}

.toolbar-right {
  width: 220px;
  display: flex;
  align-items: center;
  gap: 19.8px;
  padding-left: 64px;
}

.ext-dot {
  width: 14px;
  height: 14px;
  border-radius: 50%;
  background: #4b94a0;
  border: 2px solid #eaa13f;
}

.browser-body {
  height: 604px;
  display: flex;
}

/* sidebar */
.side {
  width: 48px;
  display: flex;
  flex-direction: column;
  align-items: center;
  background: #f8f9f9;
}

.side-up {
  margin: 6px 0 -2px;
}

.slot {
  height: 43.3px;
  width: 48px;
  flex: none;
  display: flex;
  align-items: center;
  justify-content: center;
}

.side hr {
  width: 26px;
  margin: 9px 0 9px;
  border: 0;
  border-top: 1px solid #aaa;
}

.plus-box {
  width: 26px;
  height: 26px;
  display: grid;
  place-items: center;
  background: #e4e5e5;
  border-radius: 3px;
}

.translate {
  width: 26px;
  height: 22px;
  margin-top: 8px;
  display: grid;
  place-items: end center;
  background: #fff;
  border-radius: 3px 3px 0 0;
}

.side-down {
  margin-top: 4px;
}

.side .side-down + hr {
  margin: 4px 0 8px;
}

.app {
  width: 26px;
  height: 26px;
  border-radius: 2px;
  display: flex;
  flex-direction: column;
  align-items: center;
  color: #fff;
  font-size: 7.5px;
  line-height: 10px;
}

.app-shopee {
  background: #e84c24;
  padding-top: 3px;
}

.app-vtv {
  background: #fff;
  color: #d03a55;
  line-height: 9px;
  padding-top: 1px;
}

.app-vtv b {
  display: flex;
  font-size: 11px;
  line-height: 14px;
}

.app-vtv i {
  font-style: normal;
  font-weight: 800;
  color: #d2232a;
}

.app-vtv i + i {
  color: #2a9348;
}

.app-vtv i + i + i {
  color: #24418e;
}

.app-tiki {
  background: #1c62cf;
  padding-top: 4px;
  font-size: 8.5px;
}

.app-tiki .it {
  font-style: italic;
  font-size: 8px;
}

/* lesson page behind the window */
.page {
  flex: 1;
  position: relative;
  padding: 17px 0 0 53px;
  background: #cdd4d4;
}

.lesson {
  width: 1124px;
  height: 569px;
  display: flex;
  background: #fff;
  border-radius: 6px;
}

.lesson-main {
  width: 877px;
  display: flex;
  align-items: flex-end;
  justify-content: flex-end;
  padding: 0 10px 8px;
}

.next {
  width: 100px;
  height: 34px;
  border: 0;
  border-radius: 3px;
  background: var(--blue);
  color: #fff;
  display: flex;
  align-items: center;
  justify-content: center;
  gap: 7px;
  font: bold 13.5px "Open Sans", sans-serif;
  padding: 2px 0 0 3px;
}

.outline {
  width: 237px;
  padding-top: 10px;
}

.outline-tab {
  width: 92px;
  height: 26px;
  margin-left: 93px;
  padding-right: 20px;
  text-align: right;
  background: var(--blue);
  clip-path: polygon(0 0, 82% 0, 88% 12%, 100% 100%, 0 100%);
  color: #fff;
  font-size: 14px;
  font-weight: 600;
  line-height: 25px;
}

.outline-panel {
  position: relative;
  height: 524px;
  padding: 18px 7px 0 0;
  background: #f2f2f2;
  counter-reset: slide;
}

.outline-search {
  height: 27px;
  margin: 0 0 101px 7px;
  padding-right: 8px;
  display: flex;
  align-items: center;
  justify-content: flex-end;
  border: 1px solid #ddd;
  background: #f8f8f8;
}

.outline-item {
  height: 63.2px;
  margin-left: 7px;
  padding: 1px 0 0 119px;
  display: flex;
  align-items: center;
  white-space: nowrap;
  font-size: 11.5px;
  letter-spacing: -0.37px;
  line-height: 14.8px;
  text-indent: 20px; /* room for the slide number */
  color: #5c5f60;
}

.outline-item::before {
  counter-increment: slide;
  content: counter(slide) ".";
  width: 20px;
  margin-right: -20px;
  align-self: flex-start;
  margin-top: 8px;
  text-indent: 0;
}

.outline-item.current {
  background: #9ba3a4;
  border-radius: 3px;
  color: #fff;
}

.outline-thumb {
  position: absolute;
  left: 46px;
  top: 470px;
  width: 70px;
  height: 44px;
  background: #fff;
  border: 1px solid #ddd;
}

.outline-scroll {
  position: absolute;
  left: 221px;
  top: 145px;
  width: 5px;
  height: 176px;
  border-radius: 2px;
  background: #737373;
}

.page-scroll {
  position: absolute;
  right: 0;
  top: 539px;
  width: 6px;
  height: 38px;
  border-radius: 3px;
  background: #929797;
}

/* quiz maker window */
.window {
  position: absolute;
  left: 67px;
  top: 38px;
  width: 1069px;
  height: 594px;
  display: flex;
  flex-direction: column;
  background: #fff;
  border: 1px solid #ccc;
  border-top-color: #e4e4e4;
  box-shadow: 0 3px 12px rgba(0, 0, 0, 0.4);
}

.titlebar {
  height: 23px;
  display: flex;
  align-items: center;
  gap: 3px;
  padding-left: 3px;
  color: #222;
  letter-spacing: -0.4px;
}

.win-controls {
  margin: 0 0.5px 0 auto;
  width: 118px;
  display: grid;
  grid-template-columns: repeat(3, 1fr);
  justify-items: center;
}

.menu {
  height: 21px;
  display: flex;
  background: #f6f9f9;
  border-bottom: 1px solid #e4e4e4;
  letter-spacing: -0.5px;
}

.menu-file {
  width: 50px;
  height: 20px;
  display: grid;
  place-items: center;
  padding-left: 3px;
  background: #f36c0a;
}

.menu-tab {
  width: 43px;
  line-height: 22px;
  text-align: center;
}

.menu-tab.active {
  width: 49px;
  height: 21px;
  line-height: 21px;
  background: #fff;
  border: 1px solid #e0e0e0;
  border-width: 1px 1px 0 0;
}

.ribbon {
  height: 76px;
  padding-top: 3px;
  display: grid;
  grid-template-columns: 139px 103px 54px 110px 130px 136px 44px 79px;
  border-bottom: 1px solid #d9d9d9;
}

.group {
  height: 70px;
  border-right: 1px solid #e3e3e3;
}

.group-body {
  height: 56px;
  display: flex;
  color: #505050;
}

.group-name {
  line-height: 17px;
  text-align: center;
  color: var(--muted);
  font-size: 9.8px;
  letter-spacing: -0.5px;
}

.col {
  display: flex;
  flex-direction: column;
}

.cmd {
  height: 18.6px;
  flex: none;
  display: flex;
  align-items: center;
  gap: 2px;
  white-space: nowrap;
  font-size: 9.8px;
  letter-spacing: -0.55px;
}

.big {
  display: flex;
  flex-direction: column;
  align-items: center;
  padding-top: 3px;
  text-align: center;
  white-space: nowrap;
  font-size: 9.8px;
  letter-spacing: -0.5px;
  line-height: 12.5px;
}

.big svg {
  height: 24px;
}

.big span {
  margin-top: 4.5px;
}

.w-question {
  width: 52px;
}

.w-question + .col {
  margin-left: -2px;
}

.arrow {
  width: 0;
  border: 4px solid transparent;
  border-top-color: #666;
  border-bottom: 0;
  margin-top: 3px;
}

.arrow.sm {
  border-width: 2.5px;
  border-bottom: 0;
  margin: 0 0 0 3px;
}

.pad-slide {
  padding-left: 8px;
}

.pad-clip {
  padding-left: 9px;
}

.text-tools {
  flex-direction: column;
  padding: 7px 0 0 6.5px;
  gap: 11px;
}

.tool-row {
  height: 15px;
  display: flex;
  align-items: center;
  gap: 6px;
}

.bar {
  width: 1px;
  height: 14px;
  margin: 0 -2px;
  background: #ddd;
}

.letters {
  gap: 0;
  margin-left: -4px;
  color: #333;
  font-size: 11px;
}

.letters > * {
  width: 20.5px;
  text-align: center;
}

.letters small {
  font-size: 7px;
  color: #3b7fc4;
}

.letters .sub {
  vertical-align: -2px;
}

.letters .sup {
  vertical-align: 4px;
}

.pad-ins {
  padding-left: 8px;
}

.col-left {
  width: 61px;
  height: 50px;
  border-right: 1px solid #ddd;
}

.col-right {
  margin-left: 5.5px;
}

.quiz {
  display: grid;
  grid-template-columns: 56px 36px 43px;
  justify-items: center;
  justify-content: start;
}

.center {
  justify-content: center;
}

.quick {
  height: 21px;
  display: flex;
  align-items: center;
  gap: 6.4px;
  padding: 0 0 1px 5px;
}

.quick svg:nth-child(n+4) {
  margin-left: -0.5px;
}

.quick svg:first-child {
  margin-right: -2px;
}

.quick svg:last-child {
  margin-left: 3px;
}

.work {
  height: 433px;
  display: grid;
  grid-template-columns: 217px 596px 1fr;
}

/* slide list */
.slides {
  min-height: 0;
  background: #f8f8f8;
  border-right: 1px solid #d5d5d5;
  display: flex;
  flex-direction: column;
}

.views {
  height: 42px;
  padding: 8px 0 0 6px;
  display: flex;
  background: #f6f6f6;
  border-bottom: 1px solid #ddd;
}

.view {
  width: 101px;
  height: 27px;
  display: flex;
  align-items: center;
  justify-content: center;
  gap: 5px;
  background: #fff;
  border: 1px solid #c4c4c4;
  border-left: 0;
  font-size: 12px;
}

.view.active {
  width: 103px;
  background: #fdd3ab;
  border: 1px solid #d3a680;
}

.search {
  width: 204px;
  height: 21px;
  margin: 7px 0 7px 6px;
  padding: 0 6px 1px;
  display: flex;
  align-items: center;
  justify-content: space-between;
  background: #fff;
  border: 1px solid #d6d6d6;
  color: #999;
  font-style: italic;
  font-size: 10px;
}

.list-wrap {
  flex: 1;
  min-height: 0;
  display: flex;
  background: #fff;
  padding-left: 7px;
}

.list {
  width: 189px;
  overflow: hidden;
  letter-spacing: -0.06px;
}

.list-group {
  height: 20px;
  display: flex;
  align-items: center;
  gap: 6px;
  padding-left: 5px;
  background: #e8e8e8;
}

.count {
  margin-left: auto;
  margin-right: 16px;
  padding: 0 2px;
  line-height: 12px;
  border: 1px solid #bbb;
}

.slide {
  height: 35.1px;
  padding: 5px 0 0 20px;
  display: flex;
  line-height: 13.3px;
  border-bottom: 1px solid #e0e0e0;
  white-space: nowrap;
}

.slide b {
  width: 13px;
  font-weight: normal;
}

.slide em {
  display: block;
  font-size: 10px;
  color: #666;
}

.slide.intro {
  height: 36.5px;
  padding: 6.5px 0 0 25px;
  border: 0;
}

.slide.first {
  height: 37px;
  padding-top: 7px;
}

.slide.selected {
  background: var(--orange);
}

.scroll {
  width: 13px;
  margin-left: auto;
  background: #f1f1f1;
  display: flex;
  flex-direction: column;
  align-items: center;
  padding: 6px 0 5px;
}

.scroll-thumb {
  width: 11px;
  height: 177px;
  margin: 4px 0 auto;
  background: #c0c0c0;
}

.tri {
  border: 3px solid transparent;
  border-top: 4px solid #444;
  border-bottom: 0;
}

.tri.up {
  border-top: 0;
  border-bottom: 4px solid #888;
}

/* editor */
.canvas {
  padding: 15px 0 0 16px;
  background: linear-gradient(#e2e2e2, #d8d8d8);
}

.card {
  width: 565px;
  height: 404px;
  margin-left: -0.5px;
  padding: 7px 14px 0;
  background: #f1f1f1;
  border: 1px solid #ccc;
  box-shadow: 0 2px 3px rgba(0, 0, 0, 0.25);
}

h3 {
  height: 20px;
  line-height: 19px;
  font-size: 11.5px;
  letter-spacing: -0.1px;
  color: #222;
}

.question {
  height: 58px;
  margin-top: 1px;
  padding: 0 12px 0 9px;
  display: flex;
  justify-content: space-between;
  background: #fff;
  border: 1px solid var(--line);
}

.question p {
  padding-top: 6px;
  line-height: 16px;
  letter-spacing: -0.1px;
}

mark {
  background: #addaf9;
  color: #3d566b;
}

.misspelt {
  text-decoration: underline dotted #e03030 1.5px;
  text-underline-offset: 2px;
}

.media {
  height: 43px;
  margin-top: 7px;
  padding-left: 14px;
  display: flex;
  align-items: center;
  gap: 4px;
  border-left: 1px solid #d8d8d8;
}

.media-btn {
  width: 22px;
  height: 21px;
  display: grid;
  place-items: center;
  border: 1px solid #ccd3d6;
}

.h-order {
  margin-top: 8px;
}

.choices {
  height: 145px;
  margin-top: 3px;
  border: 1px solid var(--line);
  background: #fff;
}

.choice-head {
  height: 16.5px;
  padding-left: 6px;
  line-height: 17px;
  background: #e9e9e9;
  color: #6f6f6f;
}

.choice {
  height: 25.3px;
  display: flex;
  align-items: center;
  padding: 0 15.5px 0 7px;
}

.choice span {
  flex: 1;
}

.choice.alt, .td.alt {
  background: #f5f8f8;
}

.choice.picked {
  background: #fbe8d0;
  border-bottom: 1px solid #dccfc0;
}

.choice.new {
  padding-left: 20px;
  font-style: italic;
}

.grip {
  width: 2px;
  height: 12px;
  margin-right: 12px;
  background: repeating-linear-gradient(#aaa 0 1.5px, transparent 1.5px 3.3px);
}

.picked .grip {
  background: repeating-linear-gradient(#cf9444 0 1.5px, transparent 1.5px 3.3px);
}

.choice-pic {
  width: 20px;
  height: 20px;
  margin-right: 21px;
  display: grid;
  place-items: center;
  background: #fff;
  border: 1px solid #aab7c2;
  border-radius: 1px;
}

.h-feedback {
  margin-top: 8px;
}

.feedback {
  margin-top: 3px;
  display: grid;
  grid-template-columns: 64.5px 349.5px 65px 55px;
  grid-template-rows: 17.5px 25.2px 25.2px 25.2px;
  border: 1px solid var(--line);
  border-right-width: 0;
  letter-spacing: -0.1px;
}

.th {
  padding-left: 6px;
  display: flex;
  align-items: center;
  background: #ebebeb;
  border-right: 1px solid var(--line);
  border-bottom: 1px solid var(--line);
}

.th.row-h {
  padding-left: 7px;
}

.td {
  display: flex;
  align-items: center;
  padding-left: 6.5px;
  background: #fff;
  border-right: 1px solid var(--line);
}

.msg {
  padding-right: 3px;
  white-space: nowrap;
}

.more {
  width: 27px;
  height: 21px;
  flex: none;
  margin-left: auto;
  display: grid;
  place-items: center;
  background: #f7f7f7;
  border: 1px solid #c4c4c4;
}

.more::before {
  content: "";
  width: 2px;
  height: 2px;
  background: #555;
  box-shadow: 4px 0 #555, -4px 0 #555;
}

.updown {
  width: 13px;
  height: 20px;
  flex: none;
  margin-left: auto;
  display: flex;
  flex-direction: column;
  align-items: center;
  justify-content: center;
  gap: 5px;
  background: #f2f2f2;
}

.updown + .more {
  margin-left: 5px;
}

/* options panel */
.options {
  padding: 12px 10px 0 9px;
  background: linear-gradient(#fff, #f1f1f1);
  border-left: 1px solid #d5d5d5;
  display: flex;
  flex-direction: column;
}

h2 {
  height: 32px;
  padding-left: 5px;
  line-height: 19px;
  font-size: 14.4px;
  color: #333;
  border-bottom: 2px solid #ececec;
}

.opt {
  height: 24.2px;
  padding: 0 15px 0 13px;
  display: flex;
  align-items: center;
  justify-content: space-between;
  font-size: 10px;
  letter-spacing: -0.3px;
}

.opt-type {
  height: 49px;
  padding-left: 5px;
  margin-bottom: -4px;
  font-size: 12px;
  letter-spacing: -0.45px;
}

.select {
  width: 97px;
  height: 20px;
  padding: 0 4px 0 3px;
  display: flex;
  align-items: center;
  background: #fff;
  border: 1px solid #bdbdbd;
}

.select.disabled {
  color: #aaa;
  border-color: #d9d9d9;
}

.big-select {
  width: 129px;
  height: 27px;
  padding: 0 8px;
  gap: 6px;
  background: #fafafa;
  letter-spacing: -0.2px;
}

.chev {
  margin-left: auto;
}

.check {
  padding-left: 13px;
  display: flex;
  line-height: 13.5px;
  margin-top: 4px;
  font-size: 10px;
  letter-spacing: -0.3px;
}

.check i {
  width: 11px;
  height: 11px;
  margin: 1px 4px 0 0;
  background: #fff;
  border: 1px solid #a8a8a8;
}

.time {
  width: 56px;
  height: 19px;
  margin: 2px 15px 0 auto;
  padding: 0 4px 0 3px;
  display: flex;
  align-items: center;
  justify-content: space-between;
  border: 1px solid #d9d9d9;
  color: #aaa;
}

.preview {
  height: 104px;
  margin-top: auto;
  padding: 14px 0 0 51px;
  border-top: 2px solid #e8e8e8;
}

.preview-slide {
  width: 130px;
  height: 74px;
  padding: 4px 3px 0 5px;
  background: #fff;
  border: 1px solid #eaeaea;
  font-size: 2.5px;
  line-height: 4px;
}

.preview-slide strong {
  display: block;
  margin-bottom: 4px;
}

.preview-slide p {
  height: 6px;
  margin: 0 0 1.8px 2px;
  padding-left: 3px;
  border: 1px solid #eee;
  border-radius: 1px;
}

.status {
  flex: 1;
  display: flex;
  align-items: center;
  justify-content: space-between;
  padding: 0 2px 0 6px;
  background: #f1f1f1;
  border-top: 1px solid #d5d5d5;
  font-size: 9.5px;
  letter-spacing: -0.15px;
}

.status svg {
  align-self: flex-end;
}

.cursor {
  position: absolute;
  left: 419px;
  top: 499px;
}

/* taskbar */
.taskbar {
  height: 33px;
  display: flex;
  justify-content: space-between;
  background: linear-gradient(90deg, #24363b 0%, #24363b 55%, #262b2c 75%, #20343a 85%);
}

.apps {
  display: grid;
  grid-template-columns: repeat(15, 41.3px);
}

.apps > div {
  position: relative;
  display: grid;
  place-items: center;
}

.apps .open::after {
  content: "";
  position: absolute;
  left: 3px;
  right: 3px;
  bottom: 0;
  height: 2px;
  background: #76b5e8;
}

.apps .focus {
  background: #515e62;
}

.apps .focus::after {
  left: 0;
  right: 0;
}

.office {
  position: absolute;
  left: 13px;
  top: 12px;
  font-size: 7px;
  line-height: 10px;
  color: #fff;
}

.badge {
  position: absolute;
  right: 9px;
  bottom: 6px;
  width: 9px;
  height: 9px;
  border-radius: 50%;
  font: bold 7px/9px "Open Sans", sans-serif;
  text-align: center;
  color: #fff;
}

.b-gold {
  background: #d7a43a;
}

.b-photo {
  background: #cfe3ea;
  border: 2px solid #3d6070;
}

.b-flag {
  background: linear-gradient(90deg, #2437c9 50%, #d62b2b 50%);
  border-radius: 1px;
}

.b-gray {
  background: #c8cde0;
  border: 1px solid #777;
}

.tray {
  width: 242px;
  display: grid;
  grid-template-columns: 20px 19px 20px 20px 28px 28px 64px 30px;
  justify-items: center;
  align-items: center;
  color: #fff;
  font-size: 10.5px;
  letter-spacing: -0.4px;
}

.clock {
  text-align: center;
  line-height: 15px;
}
```
